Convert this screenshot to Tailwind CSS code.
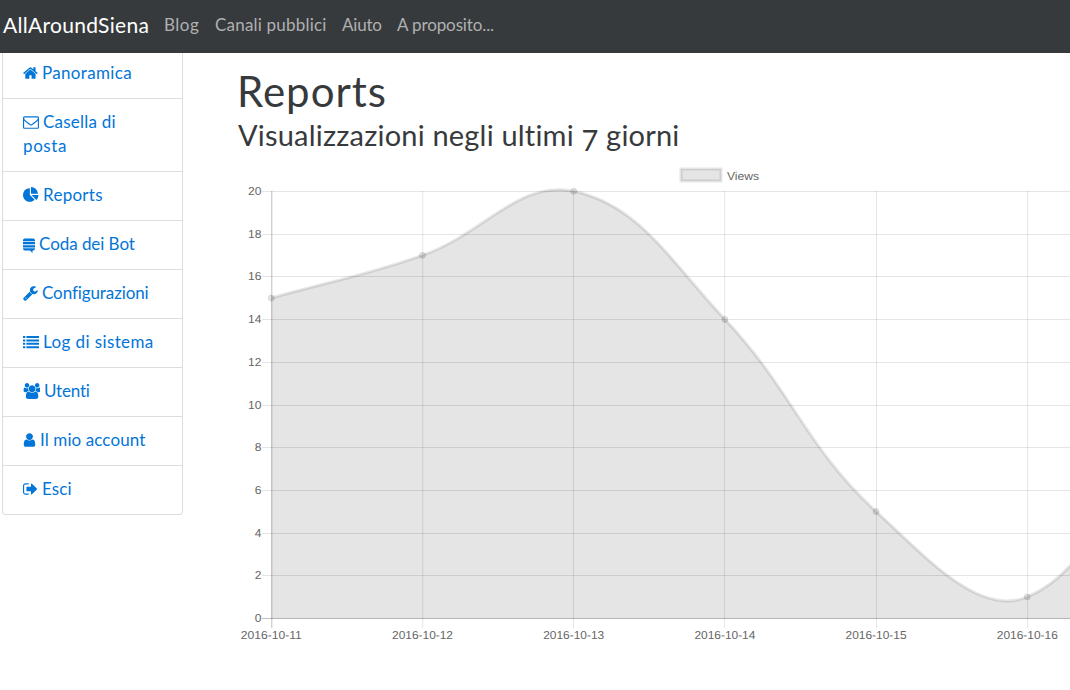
<!DOCTYPE html>
<html lang="it">
<head>
<meta charset="utf-8">
<title>AllAroundSiena</title>
<script src="https://cdn.jsdelivr.net/npm/@tailwindcss/browser@4"></script>
</head>
<body class="h-[690px] overflow-hidden bg-white font-['Lato',sans-serif] text-[17px] font-normal text-[#373a3c]">
<nav class="flex h-[53px] items-center bg-[#373a3c] pb-[3px] pl-[3px] whitespace-nowrap text-[#afb0b1]">
  <a class="w-[161px] text-[21px] tracking-[0.3px] text-white">AllAroundSiena</a>
  <a class="w-[51px] tracking-[0.5px]">Blog</a>
  <a class="w-[127px] tracking-[0.2px]">Canali pubblici</a>
  <a class="w-[55px] tracking-[-0.2px]">Aiuto</a>
  <a class="tracking-[-0.12px]">A proposito...</a>
</nav>
<div class="flex pl-[2px]">
  <aside class="h-[462px] w-[181px] shrink-0 divide-y divide-[#ddd] rounded-b border border-t-0 border-[#ddd] text-[#0275d8] *:block *:px-5 *:leading-6">
    <a class="h-[46px] pt-2 tracking-[0.33px]"><svg class="mr-[4px] inline-block h-4 w-[15px] align-[-2px]" viewBox="64 0 1680 1792" fill="currentColor"><path d="M1472 992v480q0 26-19 45t-45 19h-384v-384h-256v384h-384q-26 0-45-19t-19-45v-480q0-1 .5-3t.5-3l575-474 575 474q1 2 1 6zm223-69l-62 74q-8 9-21 11h-3q-13 0-21-7l-692-577-692 577q-12 8-24 7-13-2-21-11l-62-74q-8-10-7-23.5t11-21.5l719-599q32-26 76-26t76 26l244 204v-195q0-14 9-23t23-9h192q14 0 23 9t9 23v408l219 182q10 8 11 21.5t-7 23.5z"/></svg>Panoramica</a>
    <a class="h-[73px] pt-[11px] tracking-[0.22px]"><svg class="mr-[4px] inline-block size-4 align-[-2px]" viewBox="0 0 1792 1792" fill="currentColor"><path d="M1664 1504v-768q-32 36-69 66-268 206-426 338-51 43-83 67t-86.5 48.5-102.5 24.5h-2q-48 0-102.5-24.5t-86.5-48.5-83-67q-158-132-426-338-37-30-69-66v768q0 13 9.5 22.5t22.5 9.5h1472q13 0 22.5-9.5t9.5-22.5zm0-1051v-24.5l-.5-13-3-12.5-5.500-9-9-7.500-14-2.500h-1472q-13 0-22.500 9.500t-9.500 22.500q0 168 147 284 193 152 401 317 6 5 35 29.500t46 37.500 44.500 31.500 50.500 27.500 43 9h2q20 0 43-9t50.500-27.500 44.500-31.500 46-37.500 35-29.500q208-165 401-317 54-43 100.500-115.500t46.500-131.500zm128-37v1088q0 66-47 113t-113 47h-1472q-66 0-113-47t-47-113v-1088q0-66 47-113t113-47h1472q66 0 113 47t47 113z"/></svg>Casella di<br><span class="tracking-[0.6px]">posta</span></a>
    <a class="h-[49px] pt-[11px] tracking-[0.28px]"><svg class="mr-[4px] inline-block size-4 align-[-2px]" viewBox="0 0 1792 1792" fill="currentColor"><path d="M768 890l546 546q-106 108-247.500 168t-298.500 60q-209 0-385.500-103t-279.500-279.500-103-385.500 103-385.500 279.500-279.500 385.500-103v762zm187 6h773q0 157-60 298.500t-168 247.500zm709-128h-768v-768q209 0 385.500 103t279.500 279.500 103 385.500z"/></svg>Reports</a>
    <a class="h-[49px] pt-[11px] tracking-[-0.05px]"><svg class="mr-[4px] inline-block h-4 w-3 align-[-3px]" viewBox="0 0 12 16" fill="currentColor"><path d="M0 3.300Q0 1.500 1.800 1.500H10.200Q12 1.500 12 3.300V4.200H0zM0 5h12v2.300H0zM0 8.200h12v2.300H0zM0 11.300h12Q12 13.500 10.200 13.500H9.500V16L7 13.500H1.800Q0 13.500 0 11.300z"/></svg>Coda dei Bot</a>
    <a class="h-[49px] pt-[11px] tracking-[-0.1px]"><svg class="mr-[4px] inline-block h-4 w-[15px] align-[-2px]" viewBox="64 0 1680 1792" fill="currentColor"><path d="M448 1472q0-26-19-45t-45-19-45 19-19 45 19 45 45 19 45-19 19-45zm644-420l-682 682q-37 37-90 37-52 0-91-37l-106-108q-38-36-38-90 0-53 38-91l681-681q39 98 114.500 173.500t173.500 114.500zm634-435q0 39-23 106-47 134-164.500 217.500t-258.500 83.500q-185 0-316.500-131.500t-131.500-316.500 131.500-316.500 316.500-131.500q58 0 121.500 16.500t107.500 46.500q16 11 16 28t-16 28l-293 169v224l193 107q5-3 79-48.500t135.500-81 70.500-35.500q15 0 23.500 10t8.500 25z"/></svg>Configurazioni</a>
    <a class="h-[49px] pt-[11px] tracking-[0.4px]"><svg class="mr-[4px] inline-block size-4 align-[-2px]" viewBox="0 0 16 16" fill="currentColor"><path d="M0 2h2.300v2H0zM3.400 2H16v2H3.400zM0 5.400h2.300v2H0zM3.400 5.400H16v2H3.400zM0 8.800h2.300v2H0zM3.400 8.800H16v2H3.400zM0 12.200h2.300v2H0zM3.400 12.200H16v2H3.400z"/></svg>Log di sistema</a>
    <a class="h-[49px] pt-[11px] tracking-[-0.2px]"><svg class="mr-[4px] inline-block h-4 w-[17px] align-[-2px]" viewBox="-64 0 1920 1792" fill="currentColor"><path transform="translate(-64 0)" d="M657 896q-162 5-265 128h-134q-82 0-138-40.500t-56-118.500q0-353 124-353 6 0 43.500 21t97.500 42.500 119 21.500q67 0 133-23-5 37-5 66 0 139 81 256zm1071 637q0 120-73 189.500t-194 69.500h-874q-121 0-194-69.500t-73-189.500q0-53 3.500-103.500t14-109 26.500-108.500 43-97.500 62-81 85.500-53.500 111.500-20q10 0 43 21.500t73 48 107 48 135 21.500 135-21.500 107-48 73-48 43-21.500q61 0 111.500 20t85.500 53.500 62 81 43 97.500 26.500 108.500 14 109 3.500 103.500zm-1024-1277q0 106-75 181t-181 75-181-75-75-181 75-181 181-75 181 75 75 181zm704 384q0 159-112.500 271.500t-271.500 112.500-271.500-112.500-112.500-271.500 112.500-271.500 271.500-112.500 271.500 112.500 112.500 271.500zm576 225q0 78-56 118.500t-138 40.500h-134q-103-123-265-128 81-117 81-256 0-29-5-66 66 23 133 23 59 0 119-21.500t97.500-42.500 43.500-21q124 0 124 353zm-128-609q0 106-75 181t-181 75-181-75-75-181 75-181 181-75 181 75 75 181z"/></svg>Utenti</a>
    <a class="h-[49px] pt-[11px] tracking-[0.1px]"><svg class="mr-[4px] inline-block h-4 w-[13px] align-[-2px]" viewBox="192 0 1408 1792" fill="currentColor"><path d="M1536 1399q0 109-62.500 187t-150.500 78h-854q-88 0-150.500-78t-62.500-187q0-85 8.500-160.500t31.500-152 58.500-131 94-89 134.500-34.500q131 128 313 128t313-128q76 0 134.500 34.500t94 89 58.500 131 31.500 152 8.500 160.500zm-256-887q0 159-112.500 271.500t-271.500 112.500-271.500-112.500-112.500-271.500 112.500-271.500 271.500-112.500 271.500 112.500 112.500 271.500z"/></svg>Il mio account</a>
    <a class="h-[49px] pt-[11px] tracking-[0.1px]"><svg class="mr-[4px] inline-block h-4 w-[15px] align-[-2px]" viewBox="64 0 1680 1792" fill="currentColor"><path d="M704 1440q0 4 1 20t.5 26.500-3 23.500-10 19.500-20.500 6.500h-320q-119 0-203.500-84.500t-84.500-203.500v-704q0-119 84.500-203.500t203.500-84.500h320q13 0 22.500 9.500t9.500 22.500q0 4 1 20t.5 26.500-3 23.500-10 19.500-20.500 6.500h-320q-66 0-113 47t-47 113v704q0 66 47 113t113 47h312l11.500 1 11.500 3 8 5.500 7 9 2 13.500zm928-544q0 26-19 45l-544 544q-19 19-45 19t-45-19-19-45v-288h-448q-26 0-45-19t-19-45v-384q0-26 19-45t45-19h448v-288q0-26 19-45t45-19 45 19l544 544q19 19 19 45z"/></svg>Esci</a>
  </aside>
  <main class="ml-[55px] w-[832px] shrink-0 overflow-hidden">
    <h1 class="mt-[15px] -ml-px h-[51px] text-[42px] leading-[46px] tracking-[1px]">Reports</h1>
    <h2 class="h-[41px] text-[29px] leading-[31px] tracking-[0.2px] whitespace-nowrap">Visualizzazioni negli ultimi <span class="relative top-[5px]">7</span> giorni</h2>
    <svg class="block" width="832" height="530" viewBox="238 160 832 530" font-family="Liberation Sans, Arial, sans-serif" font-size="11.5" fill="#666" text-rendering="geometricPrecision">
      <g id="grid" stroke="#000" stroke-opacity=".1"></g>
      <g id="labels"></g>
      <path id="area" fill="#000" fill-opacity=".1"/>
      <path id="line" fill="none" stroke="#000" stroke-opacity=".1" stroke-width="3"/>
      <g id="dots" fill="#000" fill-opacity=".1" stroke="#000" stroke-opacity=".1"></g>
      <rect x="681" y="169" width="40" height="12" fill="#000" fill-opacity=".1" stroke="#000" stroke-opacity=".1" stroke-width="3"/>
      <text x="727" y="180" textLength="32" lengthAdjust="spacingAndGlyphs">Views</text>
    </svg>
  </main>
</div>
<script>
const NS = 'http://www.w3.org/2000/svg';
const add = (id, tag, attrs, text) => {
  const e = document.createElementNS(NS, tag);
  for (const k in attrs) e.setAttribute(k, attrs[k]);
  if (text !== undefined) e.textContent = text;
  document.getElementById(id).appendChild(e);
};
const X = i => 271.3 + i * 151.2, Y = v => 618.3 - v * 21.35;
for (let v = 0; v <= 20; v += 2) {
  const y = Math.floor(Y(v) + .25) + .5;
  add('grid', 'line', {x1: 262, x2: 1070, y1: y, y2: y, 'stroke-opacity': v ? .1 : .25});
  add('labels', 'text', {x: 261.5, y: y + 3.5, 'text-anchor': 'end', textLength: v < 10 ? 6.7 : 13.4, lengthAdjust: 'spacingAndGlyphs'}, v);
}
const days = ['2016-10-11', '2016-10-12', '2016-10-13', '2016-10-14', '2016-10-15', '2016-10-16'];
const ticks = [271.8, 422.8, 573.5, 724.6, 876.5, 1027.7];
days.forEach((d, i) => {
  add('grid', 'line', {x1: ticks[i], x2: ticks[i], y1: 191, y2: 628, 'stroke-opacity': i ? .1 : .25});
  add('labels', 'text', {x: X(i), y: 639, 'text-anchor': 'middle', textLength: 61, lengthAdjust: 'spacingAndGlyphs'}, d);
});
const P = [15, 17, 20, 14, 5, 1, 11].map((v, i) => [X(i), Y(v)]);
const C = P.map((p, i) => {
  const a = P[i - 1] || p, b = P[i + 1] || p;
  const d0 = Math.hypot(p[0] - a[0], p[1] - a[1]), d1 = Math.hypot(b[0] - p[0], b[1] - p[1]);
  const fa = .4 * d0 / (d0 + d1), fb = .4 * d1 / (d0 + d1);
  return [[p[0] - fa * (b[0] - a[0]), p[1] - fa * (b[1] - a[1])], [p[0] + fb * (b[0] - a[0]), p[1] + fb * (b[1] - a[1])]];
});
let d = 'M' + P[0];
for (let i = 1; i < P.length; i++) d += 'C' + C[i - 1][1] + ' ' + C[i][0] + ' ' + P[i];
document.getElementById('line').setAttribute('d', d);
document.getElementById('area').setAttribute('d', d + 'V618.5H' + P[0][0] + 'Z');
P.forEach(p => add('dots', 'circle', {cx: p[0], cy: p[1], r: 3}));
</script>
</body>
</html>
